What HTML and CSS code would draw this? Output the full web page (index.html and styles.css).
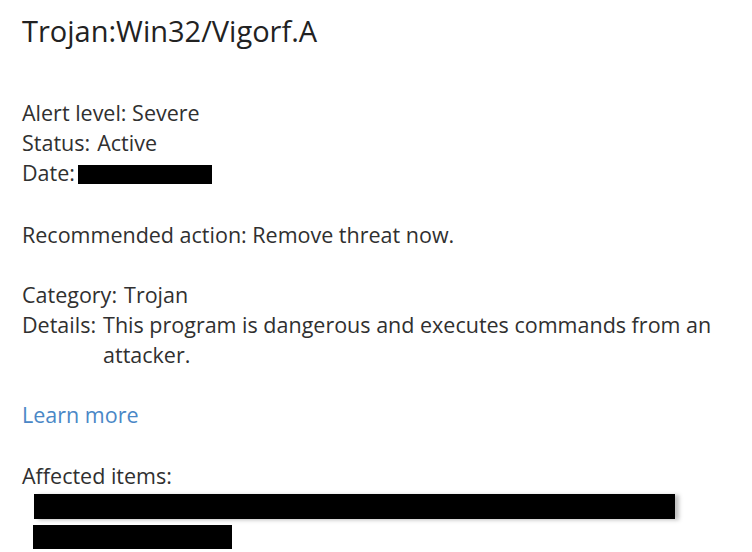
FILE: index.html
```html
<!DOCTYPE html>
<html lang="en">
<head>
  <meta charset="UTF-8">
  <meta name="viewport" content="width=device-width, initial-scale=1.0">
  <title>Trojan:Win32/Vigorf.A</title>
  <link rel="stylesheet" href="styles.css">
</head>
<body>
  <div class="threat">
    <h1 class="threat-title">Trojan:Win32/Vigorf.A</h1>

    <div class="section">
      <div class="row">Alert level: Severe</div>
      <div class="row"><span class="label">Status:</span><span>Active</span></div>
      <div class="row"><span class="label">Date:</span><span class="redact redact-date"></span></div>
    </div>

    <div class="section section-rec">
      <div class="row">Recommended action: Remove threat now.</div>
    </div>

    <div class="section">
      <div class="row"><span class="label">Category:</span><span>Trojan</span></div>
      <div class="row"><span class="label">Details:</span><span class="value">This program is dangerous and executes commands from an attacker.</span></div>
    </div>

    <div class="section">
      <a class="learn-more">Learn more</a>
    </div>

    <div class="section section-items">
      <div class="row">Affected items:</div>
      <div class="items">
        <div class="redact redact-path"></div>
        <div class="redact redact-name"></div>
      </div>
    </div>
  </div>
</body>
</html>
```

FILE: styles.css
```css
* {
  margin: 0;
  padding: 0;
  box-sizing: border-box;
}

body {
  background-color: #ffffff;
  font-family: 'Open Sans', 'Noto Sans', 'Liberation Sans', sans-serif;
  color: #303030;
}

.threat {
  padding: 11px 0 0 22px;
}

.threat-title {
  font-size: 29px;
  font-weight: 400;
  line-height: 40px;
  color: #222222;
}

.section {
  margin-top: 30px;
  font-size: 21.5px;
  line-height: 30px;
}

.threat-title + .section {
  margin-top: 47px;
}

.section-rec {
  margin-top: 32px;
}

.section-items {
  margin-top: 31px;
}

.row {
  display: flex;
  align-items: flex-start;
  white-space: nowrap;
}

.label {
  margin-right: 7px;
}

.value {
  white-space: normal;
  width: 640px;
}

.learn-more {
  display: block;
  color: #4a87c6;
  line-height: 30px;
  cursor: pointer;
}

.redact {
  background-color: #000000;
}

.redact-date {
  width: 134px;
  height: 19px;
  margin-top: 7px;
  margin-left: -4px;
}

.items {
  padding: 3px 0 0 12px;
  display: flex;
  flex-direction: column;
  gap: 6px;
}

.redact-path {
  width: 641px;
  height: 25px;
  box-shadow: 4px 1px 4px rgba(0, 0, 0, 0.25);
}

.redact-name {
  width: 199px;
  height: 24px;
  margin-left: -1px;
}
```
